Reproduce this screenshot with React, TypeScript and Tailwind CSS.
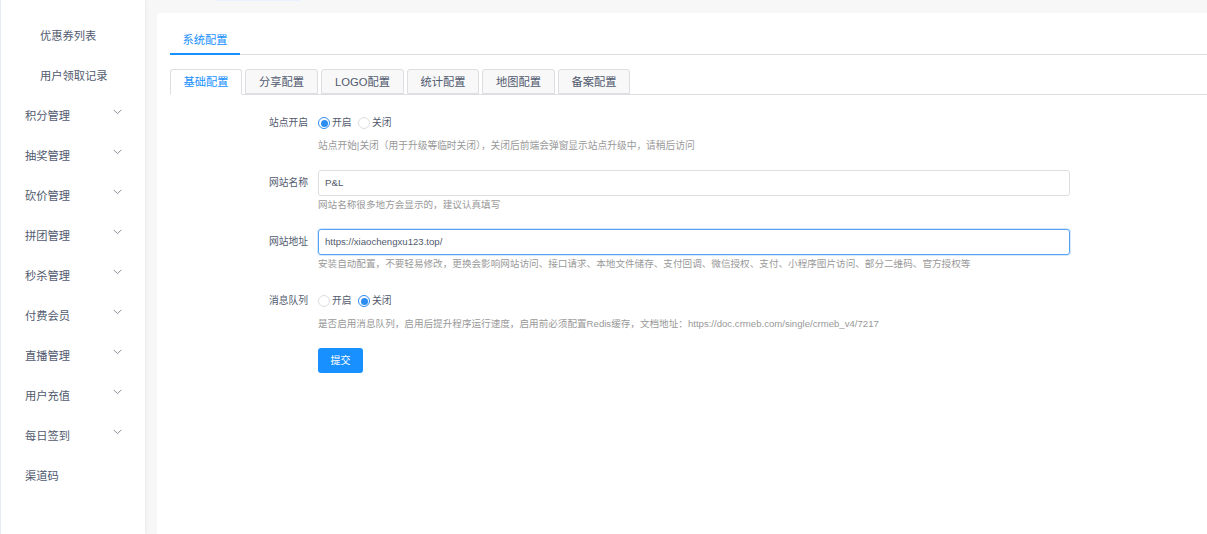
import React from "react";

const subItems = ["优惠券列表", "用户领取记录"];
const groups = ["积分管理", "抽奖管理", "砍价管理", "拼团管理", "秒杀管理", "付费会员", "直播管理", "用户充值", "每日签到"];
const tabs = [
  { t: "基础配置", w: "w-[72px]", active: true },
  { t: "分享配置", w: "w-[73px]" },
  { t: "LOGO配置", w: "w-[83px]" },
  { t: "统计配置", w: "w-[72px]" },
  { t: "地图配置", w: "w-[73px]" },
  { t: "备案配置", w: "w-[72px]" },
];

function Chevron() {
  return (
    <svg width="9" height="6" viewBox="0 0 9 6" fill="none" className="absolute right-[23px] top-[13px]">
      <path d="M0.7 0.9 L4.5 4.6 L8.3 0.9" stroke="#6b7280" strokeWidth="0.8" />
    </svg>
  );
}

function Radio({ on, label }: { on?: boolean; label: string }) {
  return (
    <span className="flex items-center mr-[5px]">
      <span className={"w-[12px] h-[12px] rounded-full border bg-white flex items-center justify-center " + (on ? "border-[#2d8cf0]" : "border-[#dcdee2]")}>
        {on && <span className="w-[7px] h-[7px] rounded-full bg-[#2d8cf0]" />}
      </span>
      <span className="ml-[2px] w-[21px] text-[#515a6e] whitespace-nowrap">{label}</span>
    </span>
  );
}

function Row({ label, className, children }: { label: string; className: string; children: React.ReactNode }) {
  return (
    <div className={"flex text-[9.75px] " + className}>
      <div className="w-[148px] pr-[10px] text-right text-[#515a6e] shrink-0">{label}</div>
      <div className="w-[752px] shrink-0">{children}</div>
    </div>
  );
}

function Help({ children, className }: { children: React.ReactNode; className: string }) {
  return <div className={"text-[#999999] leading-[16px] whitespace-nowrap " + className}>{children}</div>;
}

export default function App() {
  return (
    <div className="flex w-[1207px] h-[534px] overflow-hidden bg-[#f7f7f7] text-[11.25px] font-['Liberation_Sans','Noto_Sans_CJK_SC',sans-serif]">
      <aside className="w-[145px] h-full shrink-0 bg-white border-l border-l-[#e6ebf7] shadow-[1px_0_3px_rgba(0,0,0,0.06)] pt-[16px] text-[#515a6e]">
        {subItems.map((s) => (
          <div key={s} className="h-[40px] leading-[40px] pl-[39px]">{s}</div>
        ))}
        {groups.map((g) => (
          <div key={g} className="relative h-[40px] leading-[40px] pl-[24px]">
            {g}
            <Chevron />
          </div>
        ))}
        <div className="h-[40px] leading-[40px] pl-[24px]">渠道码</div>
      </aside>
      <main className="flex-1 min-w-0 relative">
        <div className="absolute left-[70px] top-0 w-[85px] h-[1px] bg-[#e8f3ff]" />
        <div className="mt-[13px] ml-[12px] h-[540px] bg-white rounded-tl-[4px] pl-[13px] pt-[17px]">
          <div className="flex h-[25px] border-b border-b-[#dcdee2]">
            <div className="w-[70px] h-[25px] border-b-2 border-b-[#1890ff] text-center text-[#1890ff] leading-[20px]">系统配置</div>
          </div>
          <div className="flex gap-[3px] h-[26px] mt-[14px] border-b border-b-[#dcdee2]">
            {tabs.map((x) =>
              <div
                key={x.t}
                className={"text-center leading-[25px] border border-[#dcdee2] rounded-t-[3px] " + x.w + (x.active ? " h-[26px] bg-white border-b-white text-[#1890ff]" : " h-[25px] bg-[#f8f8f9] text-[#515a6e]")}
              >
                {x.t}
              </div>
            )}
          </div>
          <Row label="站点开启" className="mt-[20px] leading-[16px]">
            <div className="flex h-[16px] items-center">
              <Radio on label="开启" />
              <Radio label="关闭" />
            </div>
            <Help className="mt-[7px] text-[9.73px]">站点开始|关闭（用于升级等临时关闭），关闭后前端会弹窗显示站点升级中，请稍后访问</Help>
          </Row>
          <Row label="网站名称" className="mt-[16px] leading-[25px]">
            <div className="h-[26px] border border-[#dcdee2] rounded-[3px] pl-[6px] text-[9.75px] leading-[24px] text-[#515a6e]">P&amp;L</div>
            <Help className="mt-[1px] text-[9.6px]">网站名称很多地方会显示的，建议认真填写</Help>
          </Row>
          <Row label="网站地址" className="mt-[16px] leading-[25px]">
            <div className="h-[26px] border border-[#57a3f3] rounded-[3px] shadow-[0_0_0_1px_rgba(45,140,240,0.2)] pl-[6px] text-[9.6px] leading-[24px] text-[#515a6e]">https://xiaochengxu123.top/</div>
            <Help className="mt-[1px] text-[9.6px]">安装自动配置，不要轻易修改，更换会影响网站访问、接口请求、本地文件储存、支付回调、微信授权、支付、小程序图片访问、部分二维码、官方授权等</Help>
          </Row>
          <Row label="消息队列" className="mt-[21px] leading-[16px]">
            <div className="flex h-[16px] items-center">
              <Radio label="开启" />
              <Radio on label="关闭" />
            </div>
            <Help className="mt-[7px] text-[9.6px]">是否启用消息队列，启用后提升程序运行速度，启用前必须配置Redis缓存，文档地址：https://doc.crmeb.com/single/crmeb_v4/7217</Help>
            <div className="mt-[16px] w-[45px] h-[25px] rounded-[3px] bg-[#1890ff] text-white text-center text-[10px] leading-[25px]">提交</div>
          </Row>
        </div>
      </main>
    </div>
  );
}
